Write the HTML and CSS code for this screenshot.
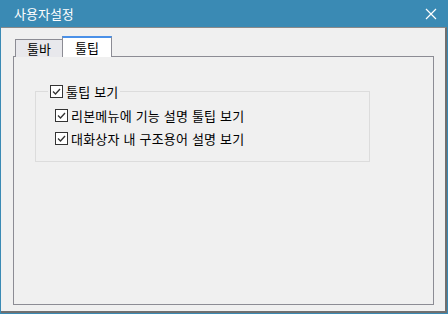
FILE: index.html
```html
<!DOCTYPE html>
<html lang="ko">
<head>
  <meta charset="UTF-8" />
  <title>사용자설정</title>
  <link rel="stylesheet" href="styles.css">
</head>
<body>
  <div class="window">
    <div class="titlebar">
      <span class="title">사용자설정</span>
      <svg class="close" width="12" height="12" viewBox="0 0 12 12">
        <path d="M1 1 L11 11 M11 1 L1 11" stroke="#fff" stroke-width="1.2" fill="none"/>
      </svg>
    </div>
    <div class="content">
      <div class="tabs">
        <div class="tab">툴바</div>
        <div class="tab active">툴팁</div>
      </div>
      <div class="panel">
        <fieldset class="group">
          <legend>
            <label class="check">
              <svg class="box" width="13" height="13" viewBox="0 0 13 13">
                <rect x="0.5" y="0.5" width="12" height="12" fill="#fff" stroke="#333"/>
                <path d="M3 6.5 L5.5 9 L10 4" stroke="#333" stroke-width="1.3" fill="none"/>
              </svg>
              툴팁 보기
            </label>
          </legend>
          <label class="check">
            <svg class="box" width="13" height="13" viewBox="0 0 13 13">
              <rect x="0.5" y="0.5" width="12" height="12" fill="#fff" stroke="#333"/>
              <path d="M3 6.5 L5.5 9 L10 4" stroke="#333" stroke-width="1.3" fill="none"/>
            </svg>
            리본메뉴에 기능 설명 툴팁 보기
          </label>
          <label class="check">
            <svg class="box" width="13" height="13" viewBox="0 0 13 13">
              <rect x="0.5" y="0.5" width="12" height="12" fill="#fff" stroke="#333"/>
              <path d="M3 6.5 L5.5 9 L10 4" stroke="#333" stroke-width="1.3" fill="none"/>
            </svg>
            대화상자 내 구조용어 설명 보기
          </label>
        </fieldset>
      </div>
    </div>
  </div>
</body>
</html>
```

FILE: styles.css
```css
html, body {
  margin: 0;
  padding: 0;
}
body {
  font-family: "Noto Sans CJK KR", "Noto Sans", sans-serif;
  font-size: 13px;
  color: #000;
}
.window {
  width: 448px;
  height: 314px;
  box-sizing: border-box;
  background: #3a8ab4;
  padding: 0 1px 1px 1px;
  display: flex;
  flex-direction: column;
}
.titlebar {
  height: 27px;
  display: flex;
  align-items: center;
  justify-content: space-between;
  padding: 0 10px 0 13px;
  color: #fff;
}
.title {
  font-size: 13px;
  margin-top: -1px;
}
.content {
  flex: 1;
  background: #f0f0f0;
  border-top: 1px solid #8a8a8a;
  border-right: 2px solid #707070;
  border-bottom: 2px solid #707070;
  padding: 8px 11px 6px 12px;
  display: flex;
  flex-direction: column;
}
.tabs {
  display: flex;
  align-items: flex-end;
  padding-left: 2px;
  height: 21px;
  margin-bottom: -1px;
  position: relative;
  z-index: 1;
}
.tab {
  width: 48px;
  height: 18px;
  box-sizing: border-box;
  border: 1px solid #8c8c94;
  border-bottom: none;
  background: #e8e8ec;
  text-align: center;
  line-height: 17px;
}
.tab.active {
  width: 50px;
  height: 21px;
  background: #fff;
  border-top: 2px solid #4a90e8;
  line-height: 19px;
  margin-left: -1px;
  padding-bottom: 1px;
}
.panel {
  flex: 1;
  border: 1px solid #8c8c94;
  padding: 26px 63px 0 21px;
}
.group {
  margin: 0;
  border: 1px solid #dcdcdc;
  padding: 4px 0 11px 19px;
}
.group legend {
  padding: 0 2px;
  margin-left: -7px;
}
.check {
  display: flex;
  align-items: center;
  gap: 3px;
  height: 23px;
  letter-spacing: 0.2px;
}
.group legend .check {
  height: 17px;
}
.box {
  flex: none;
}
```
